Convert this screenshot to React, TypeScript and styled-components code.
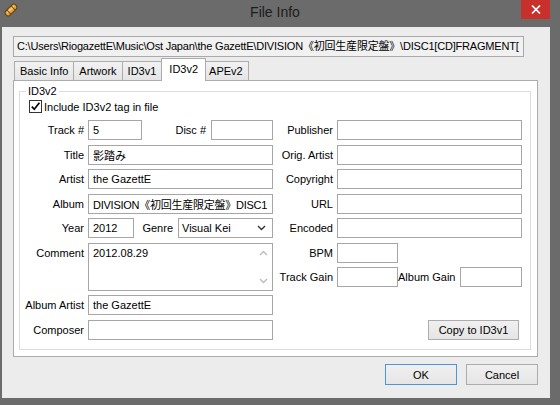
import React from "react";
import styled, { createGlobalStyle } from "styled-components";

const FONT = `"Liberation Sans", Arial, "Noto Sans CJK JP", sans-serif`;

const GlobalStyle = createGlobalStyle`
  html, body { margin: 0; padding: 0; background: #6b6b6b; }
  body { font-family: ${FONT}; font-size: 11px; color: #000; }
  * { box-sizing: border-box; }
`;

const Window = styled.div`
  width: 560px;
  height: 405px;
  display: flex;
  flex-direction: column;
  background: #6b6b6b;
  overflow: hidden;
`;

const TitleBar = styled.div`
  height: 27px;
  flex: none;
  display: flex;
  align-items: flex-start;
  padding-left: 3px;
`;

const AppIcon = styled.svg`
  margin-top: 2px;
  flex: none;
`;

const TitleText = styled.div`
  flex: 1;
  text-align: center;
  padding: 3px 0 0 10px;
  font-size: 14px;
  line-height: 18px;
  color: #1c1c1c;
`;

const CloseButton = styled.div`
  width: 29px;
  height: 19px;
  margin-right: 10px;
  background: #c7302b;
  display: flex;
  align-items: center;
  justify-content: center;
`;

const Frame = styled.div`
  flex: 1;
  display: flex;
  padding: 0 10px 7px 2px;
`;

const Content = styled.div`
  flex: 1;
  background: #ececec;
  display: flex;
  flex-direction: column;
  padding: 9px 12px 0 11px;
`;

const PathField = styled.div`
  width: 511px;
  height: 21px;
  border: 1px solid #a9a9a9;
  background: #f1f1f1;
  padding: 0 3px;
  line-height: 19px;
  letter-spacing: -0.2px;
  white-space: nowrap;
  overflow: hidden;
`;

const TabBar = styled.div`
  height: 23px;
  margin: 1px 0 -1px 1px;
  display: flex;
  align-items: flex-end;
`;

const Tab = styled.div<{ $active?: boolean }>`
  height: ${(p) => (p.$active ? 23 : 20)}px;
  padding: 0 ${(p) => (p.$active ? 7 : 5)}px ${(p) => (p.$active ? 3 : 1)}px;
  margin: 0 ${(p) => (p.$active ? -2 : 0)}px 0 -1px;
  border: 1px solid #acacac;
  border-bottom: none;
  background: ${(p) => (p.$active ? "#ffffff" : "linear-gradient(#f2f2f2, #e4e4e4)")};
  position: ${(p) => (p.$active ? "relative" : "static")};
  z-index: ${(p) => (p.$active ? 1 : "auto")};
  display: flex;
  align-items: center;
  white-space: nowrap;
  &:first-child { margin-left: 0; }
`;

const Panel = styled.div`
  height: 277px;
  border: 1px solid #acacac;
  background: #ffffff;
  padding: 4px 6px 6px 5px;
  display: flex;
  flex-direction: column;
`;

const GroupBox = styled.fieldset`
  flex: 1;
  margin: 0;
  min-width: 0;
  border: 1px solid #dcdcdc;
  padding: 2px 8px 0 0;
`;

const Legend = styled.legend`
  margin-left: 6px;
  padding: 0 2px;
  line-height: 13px;
`;

const CheckRow = styled.label`
  display: flex;
  align-items: center;
  gap: 2px;
  margin-left: 9px;
  height: 13px;
`;

const CheckBox = styled.span`
  width: 13px;
  height: 13px;
  border: 1px solid #333333;
  background: #ffffff;
  display: flex;
  align-items: center;
  justify-content: center;
`;

const Columns = styled.div`
  display: flex;
  gap: 3px;
  margin-top: 7px;
`;

const Column = styled.div<{ $label: number; $rows?: string }>`
  display: grid;
  grid-template-columns: ${(p) => p.$label}px 185px;
  grid-template-rows: ${(p) => p.$rows || "none"};
  column-gap: 4px;
  row-gap: 4.5px;
`;

const Label = styled.div<{ $top?: boolean }>`
  text-align: right;
  white-space: nowrap;
  align-self: ${(p) => (p.$top ? "start" : "center")};
  padding-top: ${(p) => (p.$top ? 4 : 0)}px;
`;

const Input = styled.input<{ $w?: number; $tight?: boolean }>`
  width: ${(p) => (p.$w ? `${p.$w}px` : "100%")};
  height: 20px;
  margin: 0;
  border: 1px solid #a6a6a6;
  border-radius: 0;
  background: #ffffff;
  padding: 0 ${(p) => (p.$tight ? 0 : 4)}px 0 4px;
  font-family: ${FONT};
  font-size: 11px;
  letter-spacing: ${(p) => (p.$tight ? "-0.25px" : "normal")};
  color: #000;
  outline: none;
`;

const Split = styled.div`
  display: flex;
  align-items: center;
`;

const InlineLabel = styled.div`
  flex: 1;
  text-align: right;
  padding-right: 5px;
  white-space: nowrap;
`;

const Combo = styled.div`
  width: 95px;
  height: 20px;
  border: 1px solid #a6a6a6;
  background: #ffffff;
  display: flex;
  align-items: center;
  padding: 0 6px 0 3px;
  justify-content: space-between;
`;

const Memo = styled.div`
  height: 48px;
  border: 1px solid #a6a6a6;
  background: #ffffff;
  display: flex;
`;

const MemoText = styled.div`
  flex: 1;
  padding: 3px 4px;
`;

const ScrollCol = styled.div`
  width: 17px;
  display: flex;
  flex-direction: column;
  justify-content: space-between;
  align-items: center;
  padding: 6px 0 6px;
`;

const ButtonCell = styled.div`
  grid-column: 1 / -1;
  justify-self: end;
  align-self: end;
  margin-right: 3px;
`;

const Button = styled.button<{ $w: number; $h: number; $default?: boolean }>`
  width: ${(p) => p.$w}px;
  height: ${(p) => p.$h}px;
  margin: 0;
  padding: 0;
  border: 1px solid ${(p) => (p.$default ? "#4b97da" : "#acacac")};
  border-radius: 0;
  background: linear-gradient(#f0f0f0, #e5e5e5);
  font-family: ${FONT};
  font-size: 11px;
  color: #000;
`;

const ButtonRow = styled.div`
  display: flex;
  justify-content: flex-end;
  gap: 9px;
  margin-top: 7px;
`;

const Chevron = ({ up, color }: { up?: boolean; color: string }) => (
  <svg width="9" height="6" viewBox="0 0 9 6">
    <path
      d={up ? "M1 5 L4.5 1.5 L8 5" : "M1 1 L4.5 4.5 L8 1"}
      fill="none"
      stroke={color}
      strokeWidth="1.4"
    />
  </svg>
);

const leftRows = "repeat(5, 20px) 48px 20px 20px";

export default function App() {
  return (
    <>
      <GlobalStyle />
      <Window>
        <TitleBar>
          <AppIcon width="16" height="16" viewBox="0 0 16 16">
            <g transform="rotate(-45 8 8)">
              <rect x="1" y="5" width="14" height="6" rx="3" fill="#e9a23b" stroke="#5e4016" strokeWidth="1" />
              <rect x="3" y="6.5" width="10" height="1.5" fill="#f7d27a" />
              <line x1="5" y1="5" x2="5" y2="11" stroke="#5e4016" strokeWidth="1" />
              <line x1="11" y1="5" x2="11" y2="11" stroke="#5e4016" strokeWidth="1" />
            </g>
          </AppIcon>
          <TitleText>File Info</TitleText>
          <CloseButton>
            <svg width="10" height="9" viewBox="0 0 10 9">
              <path d="M1 0.5 L9 8.5 M9 0.5 L1 8.5" stroke="#ffffff" strokeWidth="1.7" />
            </svg>
          </CloseButton>
        </TitleBar>
        <Frame>
          <Content>
            <PathField>
              {"C:\\Users\\RiogazettE\\Music\\Ost Japan\\the GazettE\\DIVISION《初回生産限定盤》\\DISC1[CD]FRAGMENT["}
            </PathField>
            <TabBar>
              <Tab>Basic Info</Tab>
              <Tab>Artwork</Tab>
              <Tab>ID3v1</Tab>
              <Tab $active>ID3v2</Tab>
              <Tab>APEv2</Tab>
            </TabBar>
            <Panel>
              <GroupBox>
                <Legend>ID3v2</Legend>
                <CheckRow>
                  <CheckBox>
                    <svg width="11" height="11" viewBox="0 0 11 11">
                      <path d="M1.8 5.6 L4.3 8.3 L9.4 1.8" fill="none" stroke="#000" strokeWidth="1.7" />
                    </svg>
                  </CheckBox>
                  <span>Include ID3v2 tag in file</span>
                </CheckRow>
                <Columns>
                  <Column $label={64} $rows={leftRows}>
                    <Label>Track #</Label>
                    <Split>
                      <Input $w={54} defaultValue="5" readOnly />
                      <InlineLabel>Disc #</InlineLabel>
                      <Input $w={62} defaultValue="" readOnly />
                    </Split>
                    <Label>Title</Label>
                    <Input defaultValue="影踏み" readOnly />
                    <Label>Artist</Label>
                    <Input defaultValue="the GazettE" readOnly />
                    <Label>Album</Label>
                    <Input $tight defaultValue="DIVISION《初回生産限定盤》DISC1" readOnly />
                    <Label>Year</Label>
                    <Split>
                      <Input $w={46} defaultValue="2012" readOnly />
                      <InlineLabel>Genre</InlineLabel>
                      <Combo>
                        <span>Visual Kei</span>
                        <Chevron color="#333333" />
                      </Combo>
                    </Split>
                    <Label $top>Comment</Label>
                    <Memo>
                      <MemoText>2012.08.29</MemoText>
                      <ScrollCol>
                        <Chevron up color="#bdbdbd" />
                        <Chevron color="#bdbdbd" />
                      </ScrollCol>
                    </Memo>
                    <Label>Album Artist</Label>
                    <Input defaultValue="the GazettE" readOnly />
                    <Label>Composer</Label>
                    <Input defaultValue="" readOnly />
                  </Column>
                  <Column $label={57} $rows="repeat(7, 20px) 1fr">
                    <Label>Publisher</Label>
                    <Input defaultValue="" readOnly />
                    <Label>Orig. Artist</Label>
                    <Input defaultValue="" readOnly />
                    <Label>Copyright</Label>
                    <Input defaultValue="" readOnly />
                    <Label>URL</Label>
                    <Input defaultValue="" readOnly />
                    <Label>Encoded</Label>
                    <Input defaultValue="" readOnly />
                    <Label>BPM</Label>
                    <Input $w={61} defaultValue="" readOnly />
                    <Label>Track Gain</Label>
                    <Split>
                      <Input $w={61} defaultValue="" readOnly />
                      <InlineLabel>Album Gain</InlineLabel>
                      <Input $w={62} defaultValue="" readOnly />
                    </Split>
                    <ButtonCell>
                      <Button $w={91} $h={20}>Copy to ID3v1</Button>
                    </ButtonCell>
                  </Column>
                </Columns>
              </GroupBox>
            </Panel>
            <ButtonRow>
              <Button $w={72} $h={21} $default>OK</Button>
              <Button $w={72} $h={21}>Cancel</Button>
            </ButtonRow>
          </Content>
        </Frame>
      </Window>
    </>
  );
}
